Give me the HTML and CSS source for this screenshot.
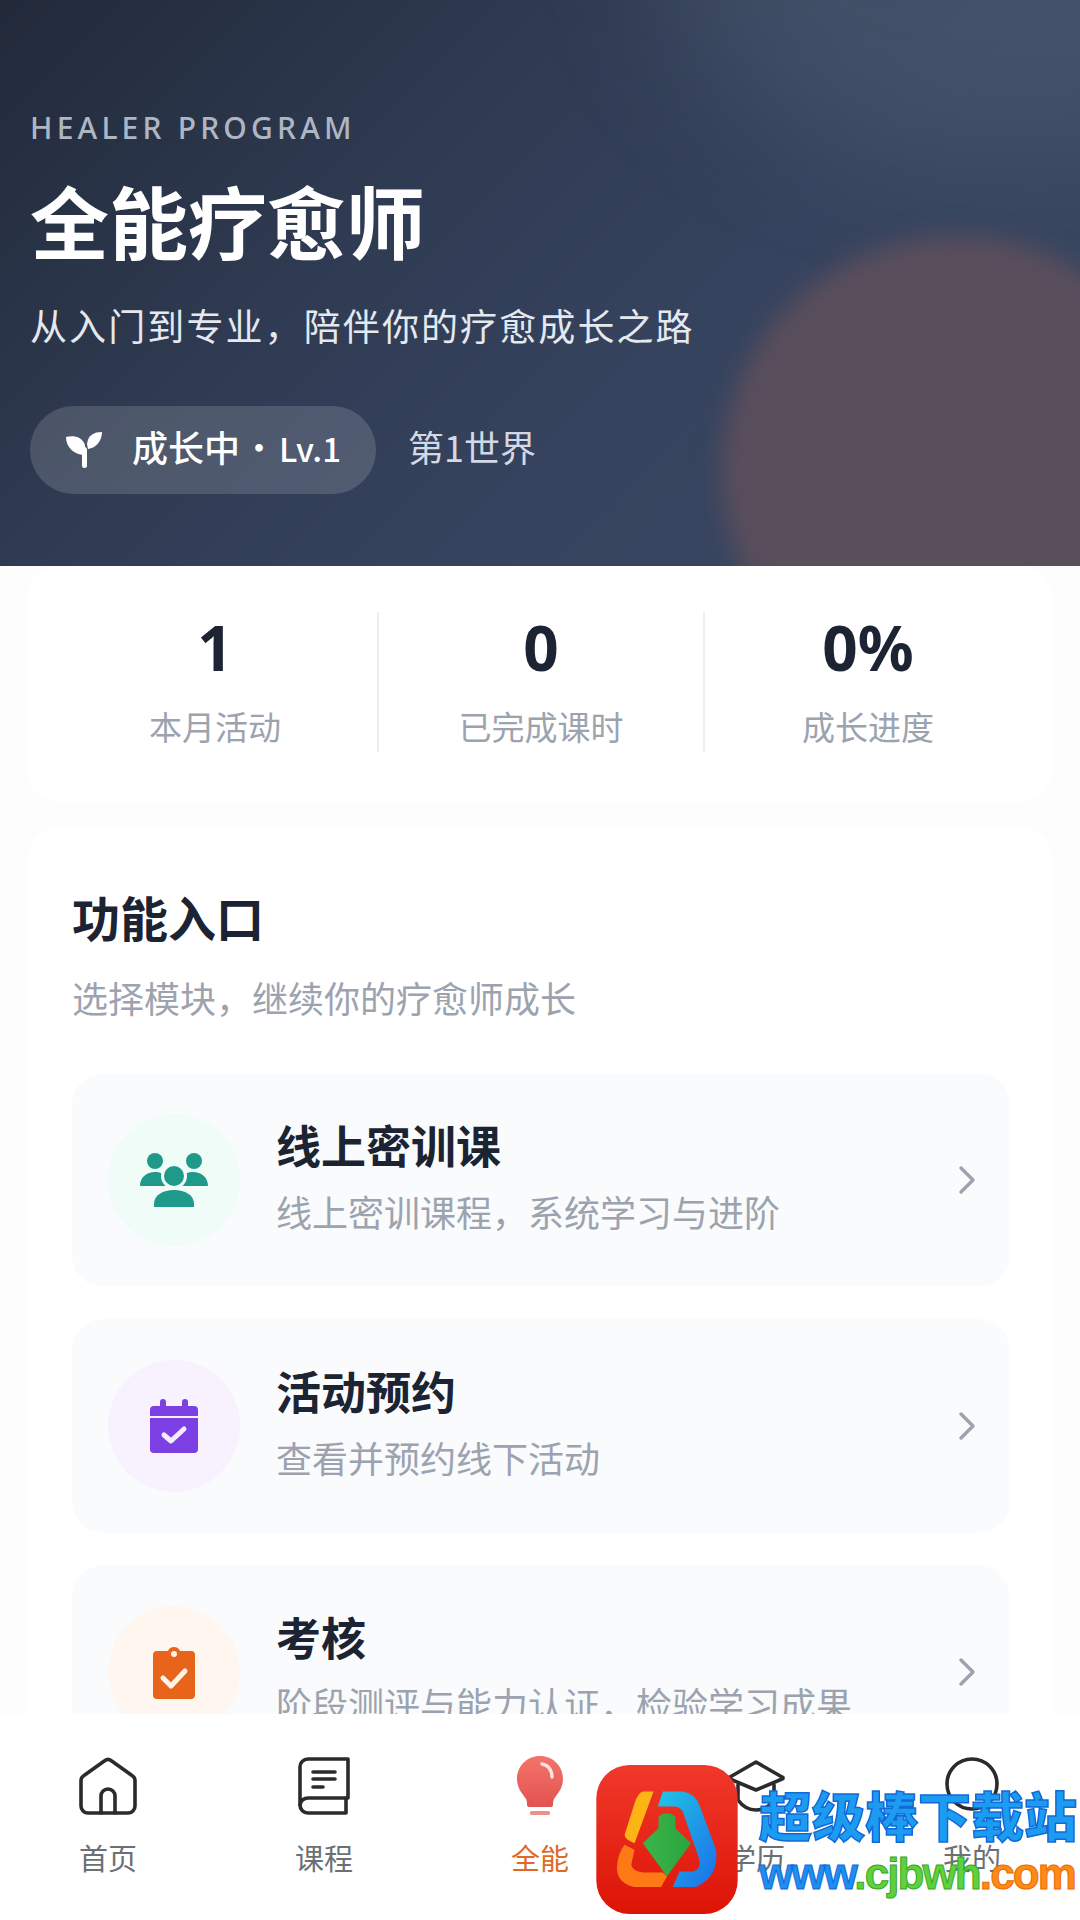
FILE: index.html
```html
<!DOCTYPE html>
<html lang="zh-CN">
<head>
    <meta charset="UTF-8">
    <meta name="viewport" content="width=device-width, initial-scale=1.0">
    <title>全能疗愈师</title>
    <link rel="stylesheet" href="styles.css">
</head>
<body>
    <div class="app">
        <main class="content">
            <section class="hero">
                <div class="hero-orb"></div>
                <div class="hero-eyebrow">HEALER PROGRAM</div>
                <h1 class="hero-title">全能疗愈师</h1>
                <p class="hero-sub">从入门到专业，陪伴你的疗愈成长之路</p>
                <div class="hero-meta">
                    <div class="level-pill">
                        <svg class="sprout" viewBox="0 0 36 38" fill="#fff">
                            <path d="M0 6c7-2 16-1 19 8v10C9 24 0 17 0 6z"/>
                            <path d="M36 1c-8 0-14 3-15 12l1 5c8-1 14-8 14-17z"/>
                            <rect x="16" y="16" width="5" height="21" rx="2.500"/>
                        </svg>
                        <span class="level-text">成长中<i class="dot">·</i><b class="level-num">Lv.1</b></span>
                    </div>
                    <span class="world">第1世界</span>
                </div>
            </section>

            <section class="card stats">
                <div class="stat">
                    <div class="stat-num">1</div>
                    <div class="stat-label">本月活动</div>
                </div>
                <div class="stat">
                    <div class="stat-num">0</div>
                    <div class="stat-label">已完成课时</div>
                </div>
                <div class="stat">
                    <div class="stat-num">0%</div>
                    <div class="stat-label">成长进度</div>
                </div>
            </section>

            <section class="card entry">
                <h2 class="entry-title">功能入口</h2>
                <p class="entry-sub">选择模块，继续你的疗愈师成长</p>

                <div class="entry-row">
                    <div class="entry-icon icon-green">
                        <svg viewBox="0 0 68 54" width="68" height="54" fill="#1f9a8a">
                            <circle cx="15" cy="8" r="8"/>
                            <circle cx="54" cy="8" r="8"/>
                            <path d="M0 33c0-9 7-14 15-14 5 0 9 2 11 5-1 3 0 7 3 9z"/>
                            <path d="M68 33c0-9-7-14-15-14-5 0-9 2-11 5 1 3 0 7-3 9z"/>
                            <circle cx="34" cy="23" r="11.500" stroke="#f0fcf8" stroke-width="3"/>
                            <path d="M14 54v-3c0-9 9-14 20-14s20 5 20 14v3z"/>
                        </svg>
                    </div>
                    <div class="entry-text">
                        <div class="row-title">线上密训课</div>
                        <div class="row-sub">线上密训课程，系统学习与进阶</div>
                    </div>
                    <svg class="chevron" viewBox="0 0 18 30"><path d="M3 3l12 12L3 27" fill="none" stroke="#9ca3af" stroke-width="3.4" stroke-linecap="round" stroke-linejoin="round"/></svg>
                </div>

                <div class="entry-row">
                    <div class="entry-icon icon-purple">
                        <svg viewBox="0 0 48 54" width="48" height="54">
                            <path d="M10 3a3 3 0 0 1 6 0v4h16V3a3 3 0 0 1 6 0v4h6a4 4 0 0 1 4 4v6H0v-6a4 4 0 0 1 4-4h6z" fill="#7c3fe4"/>
                            <path d="M0 19h48v31a4 4 0 0 1-4 4H4a4 4 0 0 1-4-4z" fill="#7c3fe4"/>
                            <path d="M14 36l7 6 13-12" fill="none" stroke="#f6ecff" stroke-width="5" stroke-linecap="round" stroke-linejoin="round"/>
                        </svg>
                    </div>
                    <div class="entry-text">
                        <div class="row-title">活动预约</div>
                        <div class="row-sub">查看并预约线下活动</div>
                    </div>
                    <svg class="chevron" viewBox="0 0 18 30"><path d="M3 3l12 12L3 27" fill="none" stroke="#9ca3af" stroke-width="3.4" stroke-linecap="round" stroke-linejoin="round"/></svg>
                </div>

                <div class="entry-row">
                    <div class="entry-icon icon-orange">
                        <svg viewBox="0 0 42 54" width="42" height="54">
                            <path d="M4 6h11a6.500 6.500 0 0 1 12 0h11a4 4 0 0 1 4 4v40a4 4 0 0 1-4 4H4a4 4 0 0 1-4-4V10a4 4 0 0 1 4-4z" fill="#e8641b"/>
                            <circle cx="21" cy="9" r="3" fill="#fff3e6"/>
                            <path d="M10 33l8 8 14-15" fill="none" stroke="#fff3e6" stroke-width="5" stroke-linecap="round" stroke-linejoin="round"/>
                        </svg>
                    </div>
                    <div class="entry-text">
                        <div class="row-title">考核</div>
                        <div class="row-sub">阶段测评与能力认证，检验学习成果</div>
                    </div>
                    <svg class="chevron" viewBox="0 0 18 30"><path d="M3 3l12 12L3 27" fill="none" stroke="#9ca3af" stroke-width="3.4" stroke-linecap="round" stroke-linejoin="round"/></svg>
                </div>
            </section>
        </main>

        <nav class="tabbar">
            <div class="tab">
                <svg viewBox="0 0 58 58" width="58" height="58" fill="none" stroke="#2b2b2e" stroke-width="3.6" stroke-linejoin="round" stroke-linecap="round">
                    <path d="M26 3.500a5 5 0 0 1 6 0l21 15a6 6 0 0 1 3 5V49a7 7 0 0 1-7 7H9a7 7 0 0 1-7-7V23.500a6 6 0 0 1 3-5z"/>
                    <path d="M22 56V39a7 7 0 0 1 14 0v17"/>
                </svg>
                <span>首页</span>
            </div>
            <div class="tab">
                <svg viewBox="0 0 52 58" width="52" height="58" fill="none" stroke="#2b2b2e" stroke-width="3.6" stroke-linejoin="round" stroke-linecap="round">
                    <path d="M50 2v39H10a8 8 0 0 0-8 7V10a8 8 0 0 1 8-8z"/>
                    <path d="M48 41v15H10a8 8 0 0 1-8-8"/>
                    <path d="M15 15h22M15 22h22M15 30h10"/>
                </svg>
                <span>课程</span>
            </div>
            <div class="tab tab-active">
                <svg viewBox="0 0 46 60" width="46" height="60">
                    <defs>
                        <linearGradient id="bulbFill" x1="0" y1="0" x2="0" y2="1">
                            <stop offset="0" stop-color="#f4746a"/>
                            <stop offset="1" stop-color="#e2524f"/>
                        </linearGradient>
                    </defs>
                    <path d="M23 0C10 0 0 10 0 23c0 9 5 14 9 20 1 2 1 4 1 6 0 1 1 2 2 2h22c1 0 2-1 2-2 0-2 0-4 1-6 4-6 9-11 9-20C46 10 36 0 23 0z" fill="url(#bulbFill)"/>
                    <rect x="13" y="55" width="20" height="4" rx="1.500" fill="#f0908a"/>
                    <path d="M25 8c6 1 10 6 10 13" fill="none" stroke="#fde3df" stroke-width="3.500" stroke-linecap="round"/>
                </svg>
                <span>全能</span>
            </div>
            <div class="tab">
                <svg viewBox="0 0 58 52" width="58" height="52" fill="none" stroke="#2b2b2e" stroke-width="3.6" stroke-linejoin="round" stroke-linecap="round">
                    <path d="M29 2l26 15a1 1 0 0 1 0 2L29 30 3 19a1 1 0 0 1 0-2z"/>
                    <path d="M11 25v15c5 7 12 10 18 10s13-3 18-10V25"/>
                </svg>
                <span>学历</span>
            </div>
            <div class="tab">
                <svg viewBox="0 0 54 58" width="54" height="58" fill="none" stroke="#2b2b2e" stroke-width="3.6">
                    <circle cx="27" cy="27" r="25"/>
                </svg>
                <span>我的</span>
            </div>
        </nav>

        <!-- 下载站水印，盖在底栏上面 -->
        <div class="watermark">
            <svg class="wm-logo" viewBox="50 255 425 448">
                <defs>
                    <linearGradient id="wmRed" x1="0" y1="0" x2="0" y2="1">
                        <stop offset="0" stop-color="#f0392b"/>
                        <stop offset="1" stop-color="#dc1406"/>
                    </linearGradient>
                    <linearGradient id="wmBlue" x1="0" y1="0" x2="1" y2="1">
                        <stop offset="0" stop-color="#21c4e6"/>
                        <stop offset="1" stop-color="#1c6fe8"/>
                    </linearGradient>
                    <linearGradient id="wmGreen" x1="0" y1="0" x2="1" y2="0">
                        <stop offset="0" stop-color="#3cb54a"/>
                        <stop offset="1" stop-color="#2aa43e"/>
                    </linearGradient>
                </defs>
                <rect x="50" y="255" width="425" height="448" rx="100" fill="url(#wmRed)"/>
                <path d="M222 335h-32q-15 5-25 35l-30 95q0 15 30 25z" fill="#fdb515"/>
                <path d="M135 495l30 15-10 45q5 20 35 23h60l12 12-17 32h-80q-55-12-53-62 3-40 23-65z" fill="#ff7a14"/>
                <path d="M250 335h60q35 5 50 40l50 135q10 80-60 112h-70l20-47h40q25-5 20-35l-50-145q-10-15-25-15h-50z" fill="url(#wmBlue)"/>
                <path d="M262 590L190 490l47-45v-35q25-20 51 0v35l47 45z" fill="url(#wmGreen)"/>
            </svg>
            <div class="wm-text">
                <div class="wm-cn">超级棒下载站</div>
                <div class="wm-url"><span class="wm-blue">www</span><span class="wm-green">.cjbwh</span><span class="wm-orange">.com</span></div>
            </div>
        </div>
    </div>
</body>
</html>
```

FILE: styles.css
```css
* {
    box-sizing: border-box;
}
html, body {
    margin: 0;
    padding: 0;
}
body {
    font-family: "Noto Sans CJK SC", sans-serif;
    background-color: #fdfdfe;
}
.app {
    position: relative;
    width: 1080px;
    height: 1920px;
    display: flex;
    flex-direction: column;
    overflow: hidden;
}
.content {
    flex: 1;
    min-height: 0;
    overflow: hidden;
}

/* 顶部 */
.hero {
    position: relative;
    height: 566px;
    padding: 110px 30px 0;
    overflow: hidden;
    background: linear-gradient(135deg, #222a3a 0%, #2f3b52 35%, #36435e 62%, #3a4862 100%);
    color: #fff;
}
.hero::before {
    content: "";
    position: absolute;
    right: -220px;
    top: -240px;
    width: 640px;
    height: 400px;
    border-radius: 50%;
    background: rgba(110, 124, 145, 0.24);
    filter: blur(60px);
}
.hero-orb {
    position: absolute;
    left: 722px;
    top: 236px;
    width: 470px;
    height: 470px;
    border-radius: 50%;
    background: #5a4e5c;
    filter: blur(12px);
}
.hero-eyebrow, .hero-title, .hero-sub, .hero-meta {
    position: relative;
}
.hero-eyebrow {
    font-family: "Noto Sans", sans-serif;
    font-size: 30px;
    line-height: 36px;
    letter-spacing: 4.2px;
    color: #aeb6c4;
    font-weight: 500;
}
.hero-title {
    margin: 24px 0 0;
    font-size: 79px;
    line-height: 100px;
    font-weight: 700;
}
.hero-sub {
    margin: 30px 0 0;
    font-size: 37px;
    line-height: 50px;
    letter-spacing: 2.1px;
    color: #e4e8ef;
}
.hero-meta {
    margin-top: 56px;
    display: flex;
    align-items: center;
    gap: 32px;
}
.level-pill {
    width: 346px;
    height: 88px;
    padding-left: 36px;
    display: flex;
    align-items: center;
    gap: 30px;
    border-radius: 44px;
    background: rgba(255, 255, 255, 0.15);
    font-size: 36px;
    font-weight: 500;
}
.sprout {
    width: 36px;
    height: 38px;
    flex: none;
}
.level-text, .world {
    padding-bottom: 8px;
}
.dot {
    font-style: normal;
    font-weight: 400;
    margin: 0 2px 0 1px;
}
.level-num {
    font-size: 33px;
    font-weight: 500;
}
.world {
    font-size: 36px;
    color: #d3d9e4;
}

/* 卡片 */
.card {
    margin: 0 28px;
    background: #fff;
    border-radius: 32px;
}
.stats {
    height: 236px;
    padding: 46px 24px 0 25px;
    display: grid;
    grid-template-columns: repeat(3, 326px);
    align-content: start;
}
.stat {
    height: 140px;
    text-align: center;
    border-right: 2px solid #eceef1;
}
.stat:last-child {
    border-right: none;
}
.stat-num {
    margin-top: -1px;
    font-family: "Noto Sans", sans-serif;
    font-size: 62px;
    line-height: 72px;
    font-weight: 700;
    color: #1c2333;
}
.stat-label {
    margin-top: 21px;
    font-size: 33px;
    line-height: 44px;
    color: #9ca3af;
}
.entry {
    margin-top: 24px;
    padding: 60px 42px 0 44px;
    height: 1000px;
}
.entry-title {
    margin: 0;
    font-size: 48px;
    line-height: 60px;
    font-weight: 600;
    color: #1c2333;
}
.entry-sub {
    margin: 26px 0 0;
    font-size: 36px;
    line-height: 50px;
    color: #9ca3af;
}
.entry-row {
    height: 214px;
    margin-top: 32px;
    padding: 0 34px 0 36px;
    display: flex;
    align-items: center;
    background: #f9fbfc;
    border-radius: 32px;
}
.entry-sub + .entry-row {
    margin-top: 51px;
}
.entry-icon {
    width: 132px;
    height: 132px;
    flex: none;
    display: flex;
    align-items: center;
    justify-content: center;
    border-radius: 50%;
}
.icon-green {
    background: #f0fcf8;
}
.icon-purple {
    background: #f8f2fe;
}
.icon-orange {
    background: #fff7ef;
}
.entry-text {
    flex: 1;
    margin-left: 36px;
    padding-bottom: 6px;
}
.row-title {
    margin-top: -3px;
    font-size: 45px;
    line-height: 60px;
    font-weight: 600;
    color: #1c2333;
}
.row-sub {
    margin-top: 11px;
    font-size: 36px;
    line-height: 50px;
    color: #9ca3af;
}
.chevron {
    width: 18px;
    height: 30px;
    flex: none;
}

/* 底栏 */
.tabbar {
    height: 206px;
    flex: none;
    padding-top: 42px;
    display: grid;
    grid-template-columns: repeat(5, 216px);
    background: #fff;
}
.tab {
    display: flex;
    flex-direction: column;
    align-items: center;
    font-size: 29px;
    color: #6b7075;
}
.tab svg {
    height: 60px;
    flex: none;
}
.tab span {
    margin-top: 21px;
    line-height: 40px;
}
.tab-active {
    color: #df6a26;
}

/* 水印 */
.watermark {
    position: absolute;
    left: 596px;
    top: 1765px;
    display: flex;
}
.wm-logo {
    width: 142px;
    height: 149px;
    flex: none;
}
.wm-text {
    margin: 18px 0 0 21px;
    width: 320px;
}
.wm-cn {
    font-size: 53px;
    line-height: 62px;
    font-weight: 900;
    white-space: nowrap;
    color: #1c9cf0;
    -webkit-text-stroke: 1.5px #1268d8;
}
.wm-url {
    margin-top: 5px;
    font-family: "Liberation Sans", sans-serif;
    font-size: 44px;
    line-height: 48px;
    font-weight: 700;
    letter-spacing: -1.9px;
    white-space: nowrap;
}
.wm-blue {
    color: #1c8ff0;
    -webkit-text-stroke: 1px #1268d8;
}
.wm-green {
    color: #5fd13c;
    -webkit-text-stroke: 1px #35a828;
}
.wm-orange {
    color: #ff8a14;
    -webkit-text-stroke: 1px #e86a08;
}
```
